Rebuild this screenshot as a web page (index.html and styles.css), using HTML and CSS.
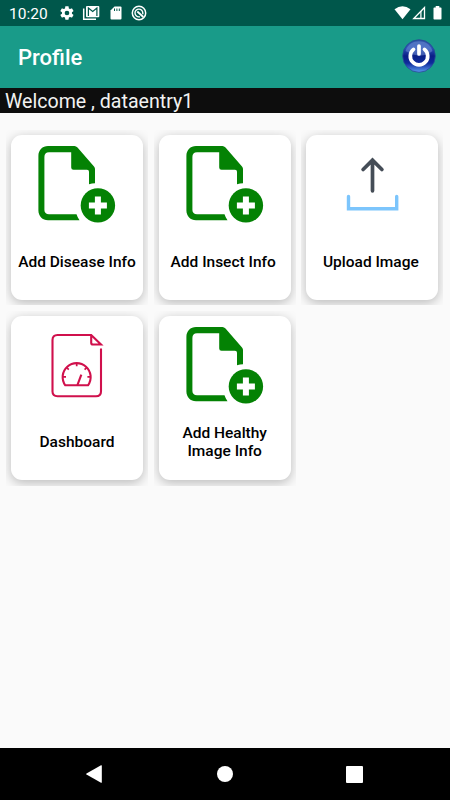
FILE: index.html
```html
<!DOCTYPE html>
<html lang="en">
<head>
    <meta charset="UTF-8">
    <meta name="viewport" content="width=device-width, initial-scale=1.0">
    <title>Profile</title>
    <link rel="stylesheet" href="styles.css">
</head>
<body>
    <!-- shared document icon -->
    <svg class="defs" width="0" height="0">
        <symbol id="add-file" viewBox="0 0 80 80">
            <path fill="#048204" d="M37.5 1H11C5.500 1 1.400 5 1.400 11V65.500C1.400 71 5.500 75.300 11 75.300H42.500Q40.500 72.500 39.500 69.300H12C9 69.300 7.400 67.500 7.400 65V12C7.400 9 9 7.200 12 7.200H34.200V22.500Q34.200 24.700 36.500 24.700H50Q52 24.700 52 26.700V39.300Q55 38.300 58 38.200V24Q58 22.500 57 21.400L40.500 2.500Q39 1 37.500 1Z"/>
            <circle cx="60.900" cy="60.400" r="17.200" fill="#048204"/>
            <path fill="#fff" d="M57.900 51.400h6v6h6v6h-6v6h-6v-6h-6v-6h6z"/>
        </symbol>
    </svg>

    <div class="status-bar">
        <span class="time">10:20</span>
        <div class="notifications">
            <svg width="16" height="16" viewBox="0 0 24 24"><path fill="#fff" d="M19.400 13a7.500 7.500 0 0 0 0-2l2.100-1.600c.2-.2.300-.5.100-.7l-2-3.400c-.1-.2-.4-.3-.6-.2l-2.500 1a7 7 0 0 0-1.700-1l-.4-2.600c0-.3-.2-.5-.5-.5h-4c-.3 0-.5.200-.5.500L9 5.100a7 7 0 0 0-1.700 1l-2.500-1c-.2-.1-.5 0-.6.200l-2 3.400c-.1.200-.1.500.1.700L4.500 11a7.500 7.500 0 0 0 0 2l-2.200 1.600c-.2.200-.2.500-.1.700l2 3.400c.1.200.4.300.6.200l2.500-1a7 7 0 0 0 1.700 1l.4 2.600c0 .3.200.5.500.5h4c.3 0 .5-.2.500-.5l.4-2.600a7 7 0 0 0 1.700-1l2.500 1c.2.100.5 0 .6-.2l2-3.400c.2-.2.100-.5-.1-.7zM12 15.500a3.500 3.500 0 1 1 0-7 3.500 3.500 0 0 1 0 7z"/></svg>
            <svg width="18" height="16" viewBox="0 0 18 16"><path fill="none" stroke="#fff" stroke-width="1.500" d="M1.700 3.500V14.300H14"/><path fill="#fff" d="M5 1h11.300q1 0 1 1v9.300q0 1-1 1H5q-1 0-1-1V2q0-1 1-1z"/><path fill="none" stroke="#00574b" stroke-width="1.200" d="M6.400 11V3l4.300 3.500L14.900 3v8"/></svg>
            <svg width="12" height="16" viewBox="0 0 12 16"><path fill="#fff" d="M4.500 1.500H10.500q1 0 1 1v11q0 1-1 1H1.500q-1 0-1-1V5.500z"/><path stroke="#00574b" d="M4.500 3.500v2.500M6.900 3.500v2.500M9.300 3.500v2.500"/></svg>
            <svg width="16" height="16" viewBox="0 0 16 16" fill="none" stroke="#fff"><circle cx="8" cy="8" r="6.700" stroke-width="1.500"/><path stroke-width="1.400" d="M11.800 9.300V8A3.900 3.900 0 1 0 8 11.900H9"/><path stroke-width="1.800" d="M6.300 6.500l6 5.500"/></svg>
        </div>
        <div class="signals">
            <svg width="17" height="14" viewBox="0 0 16 14"><path fill="#fff" d="M0 3.300Q8-2.700 16 3.300L8 13.300z"/></svg>
            <svg width="14" height="14" viewBox="0 0 14 14"><path fill="none" stroke="#fff" stroke-width="1.300" d="M1.800 12.500L12.500 1.500V12.500z"/><path fill="#fff" d="M8.300 5.800l1.200-1.300V12.500H8.300z"/></svg>
            <svg class="battery" width="9" height="14" viewBox="0 0 9 14"><path fill="#fff" d="M2.700 0h3.600v1.500h1.400q.8 0 .8.800v10.400q0 .8-.8.800H1.300q-.8 0-.8-.8V2.300q0-.8.8-.8h1.400z"/></svg>
        </div>
    </div>

    <div class="app-bar">
        <h1>Profile</h1>
        <svg class="power" width="34" height="34" viewBox="0 0 34 34">
            <defs>
                <linearGradient id="blue" x1="0" y1="0" x2="0" y2="1">
                    <stop offset="0" stop-color="#2c52a4"/>
                    <stop offset=".25" stop-color="#2d54b8"/>
                    <stop offset=".5" stop-color="#0a1f86"/>
                    <stop offset=".72" stop-color="#0e2a9c"/>
                    <stop offset="1" stop-color="#5a9af0"/>
                </linearGradient>
            </defs>
            <circle cx="17" cy="17" r="16.300" fill="url(#blue)" stroke="#274a94" stroke-width=".8"/>
            <path fill="#7f9bdc" opacity=".45" d="M3.500 12C6 5 11 2.300 17 2.300S28 5 30.500 12Q24 17 17 16.500T3.500 12z"/>
            <path fill="none" stroke="#fff" stroke-width="3.700" stroke-linecap="round" d="M11.500 10.400a8.700 8.700 0 1 0 11 0M17 7v8"/>
        </svg>
    </div>

    <div class="welcome">Welcome , dataentry1</div>

    <div class="grid">
        <div class="cell">
            <div class="card">
                <svg class="icon"><use href="#add-file"/></svg>
                <p>Add Disease Info</p>
            </div>
        </div>
        <div class="cell">
            <div class="card">
                <svg class="icon"><use href="#add-file"/></svg>
                <p class="shifted">Add Insect Info</p>
            </div>
        </div>
        <div class="cell">
            <div class="card">
                <svg class="icon" viewBox="0 0 80 80" fill="none" stroke-linecap="round">
                    <path stroke="#454d57" stroke-width="3.700" d="M40.500 45.800V15.200M31.100 24.500L40.500 15.200L49.900 24.500"/>
                    <path stroke="#7cc5fc" stroke-width="3.400" d="M16.500 51.500V63.700H64.700V51.500"/>
                </svg>
                <p class="shifted">Upload Image</p>
            </div>
        </div>
        <div class="cell">
            <div class="card">
                <svg class="icon" viewBox="0 0 80 80" fill="none" stroke="#d0104c" stroke-width="2.100">
                    <path d="M64 22.500V65.500Q64 70.200 59 70.200H20.500Q15.500 70.200 15.500 65.500V14Q15.500 9 20.500 9H54.200L64 18.500H56Q54.200 18.500 54.200 17V9.200"/>
                    <path d="M28.300 59.300A14 14 0 1 1 51 59.300Z"/>
                    <path stroke-width="1.700" d="M39.700 37.200v3M29.500 41.400l2.300 2.300M49.900 41.400l-2.300 2.300M26 50.900h3M53.400 50.900h-3"/>
                    <path d="M40.400 59.200L44.300 48.700"/>
                </svg>
                <p>Dashboard</p>
            </div>
        </div>
        <div class="cell">
            <div class="card">
                <svg class="icon"><use href="#add-file"/></svg>
                <p>Add Healthy Image Info</p>
            </div>
        </div>
    </div>

    <div class="nav-bar">
        <svg width="18" height="20" viewBox="0 0 18 20"><path fill="#fff" d="M16 1.300q.8-.4.800.5v16.400q0 .9-.8.500L1.500 10.500q-.8-.5 0-1z"/></svg>
        <span class="home"></span>
        <span class="recent"></span>
    </div>
</body>
</html>
```

FILE: styles.css
```css
* {
    box-sizing: border-box;
}

body {
    margin: 0;
    height: 800px;
    display: flex;
    flex-direction: column;
    font-family: Roboto, sans-serif;
    background-color: #fafafa;
}

svg {
    display: block;
}

.defs {
    position: absolute;
}

.status-bar {
    display: flex;
    align-items: center;
    height: 26px;
    padding: 0 8px 0 9px;
    background-color: #00574b;
    color: #fff;
}

.time {
    width: 50px;
    font-size: 15.500px;
    line-height: 26px;
    padding-top: 1px;
}

.notifications {
    display: flex;
    align-items: center;
    gap: 8px;
}

.notifications svg:nth-child(2) {
    margin-left: -1px;
}

.notifications svg:nth-child(3) {
    margin: 0 1px 0 2px;
}

.signals {
    display: flex;
    gap: 1px;
    margin-left: auto;
}

.battery {
    margin-left: 6px;
}

.app-bar {
    display: flex;
    align-items: center;
    justify-content: space-between;
    height: 62px;
    padding: 0 14px 2px 18px;
    background-color: #199b89;
    color: #fff;
}

.app-bar h1 {
    margin: 3px 0 0;
    font-size: 22px;
    font-weight: 500;
}

.welcome {
    height: 25px;
    padding-left: 5px;
    background-color: #0d0d0d;
    color: #f2f2f2;
    font-size: 19.600px;
    line-height: 27px;
}

.grid {
    flex: 1;
    display: grid;
    grid-template-columns: repeat(3, 142px);
    grid-auto-rows: 175px;
    align-content: start;
    gap: 5.500px 5.700px;
    padding: 17px 6px 0;
}

/* the card shadow is cut off at the cell edge */
.cell {
    overflow: hidden;
    padding: 5.400px 5px;
}

.card {
    display: flex;
    flex-direction: column;
    align-items: center;
    height: 164.300px;
    padding-top: 10px;
    background: #fff;
    border-radius: 11px;
    box-shadow: 0 3px 12px rgba(0, 0, 0, 0.26);
}

.icon {
    width: 80px;
    height: 80px;
    flex: none;
}

.card p {
    display: flex;
    align-items: center;
    justify-content: center;
    width: 126px;
    height: 40px;
    margin: 16.500px 0 0;
    font-size: 15.500px;
    font-weight: 500;
    line-height: 18px;
    text-align: center;
    color: #000;
}

.card .shifted {
    padding-right: 3px;
}

.nav-bar {
    display: flex;
    align-items: center;
    justify-content: space-between;
    height: 52px;
    padding: 0 87px 0 85px;
    background: #000;
}

.home {
    width: 16px;
    height: 16px;
    border-radius: 50%;
    background: #fff;
}

.recent {
    width: 17px;
    height: 17px;
    border-radius: 1px;
    background: #fff;
}
```
